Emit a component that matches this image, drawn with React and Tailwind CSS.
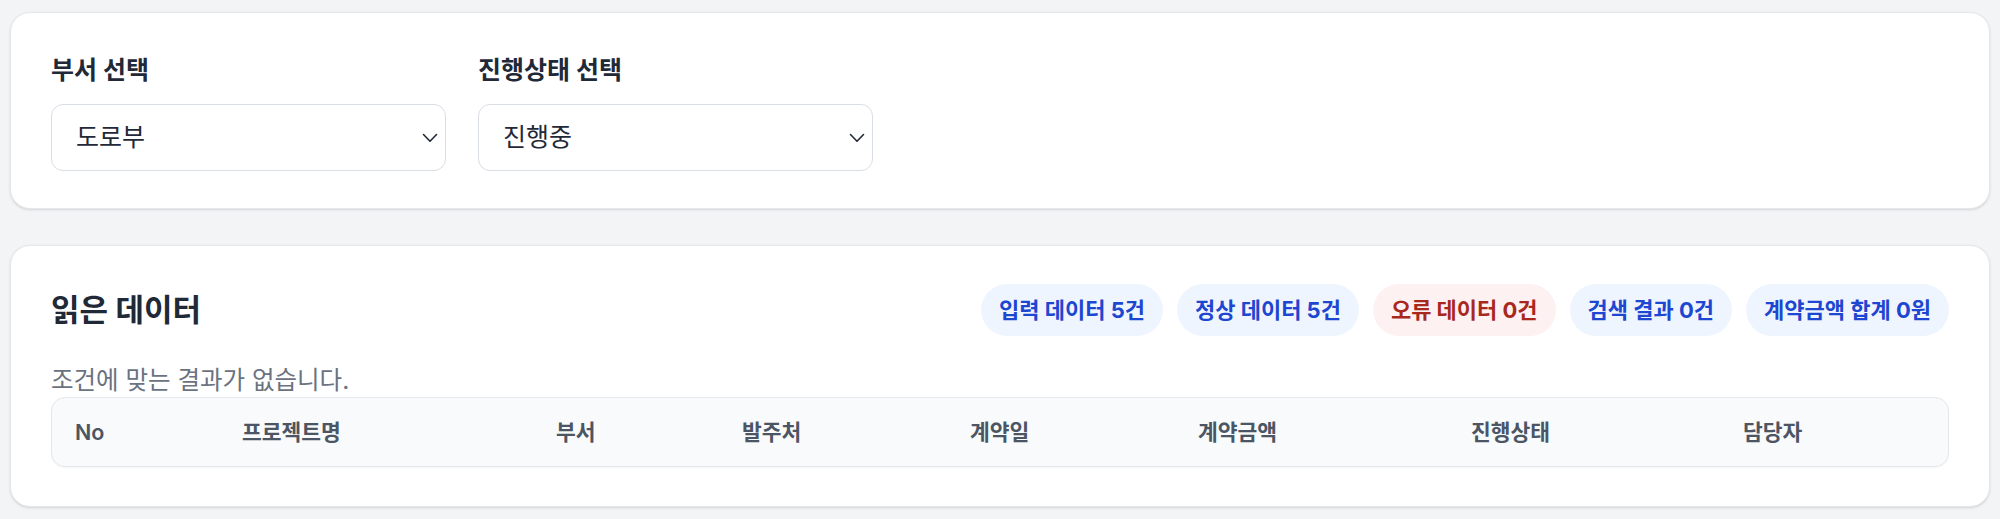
import React from "react";

const badges = [
  { label: "입력 데이터 5건", tone: "blue" },
  { label: "정상 데이터 5건", tone: "blue" },
  { label: "오류 데이터 0건", tone: "red" },
  { label: "검색 결과 0건", tone: "blue" },
  { label: "계약금액 합계 0원", tone: "blue" },
];

const columns = [
  { name: "No", width: "w-[167px]" },
  { name: "프로젝트명", width: "w-[314px]" },
  { name: "부서", width: "w-[186px]" },
  { name: "발주처", width: "w-[228px]" },
  { name: "계약일", width: "w-[228px]" },
  { name: "계약금액", width: "w-[273px]" },
  { name: "진행상태", width: "w-[272px]" },
  { name: "담당자", width: "w-[228px]" },
];

function Chevron() {
  return (
    <svg width="16" height="10" viewBox="0 0 16 10" fill="none" className="shrink-0">
      <path d="M1.5 1.5 8 8.2l6.5-6.7" stroke="#1f2937" strokeWidth="1.6" strokeLinecap="round" strokeLinejoin="round" />
    </svg>
  );
}

function SelectBox({ label, value }) {
  return (
    <div className="w-[395px]">
      <div className="text-[25px] leading-[34px] font-bold text-[#1f2937]">{label}</div>
      <div className="mt-[17px] h-[67px] flex items-center justify-between rounded-[12px] border border-[#d9dde4] bg-white pl-[24px] pr-[7px]">
        <span className="text-[25px] text-[#1f2937]">{value}</span>
        <Chevron />
      </div>
    </div>
  );
}

export default function App() {
  return (
    <div
      className="min-h-[519px] bg-[#f3f4f6] px-[10px] pt-3 pb-3"
      style={{ fontFamily: 'Inter, "Noto Sans CJK KR", sans-serif' }}
    >
      <section className="h-[197px] rounded-[20px] border border-[#e5e7eb] bg-white px-10 pt-10 shadow-sm">
        <div className="flex gap-8">
          <SelectBox label="부서 선택" value="도로부" />
          <SelectBox label="진행상태 선택" value="진행중" />
        </div>
      </section>

      <section className="mt-[36px] h-[262px] rounded-[20px] border border-[#e5e7eb] bg-white px-10 pt-[38px] shadow-sm">
        <div className="flex h-[52px] items-center justify-between">
          <h2 className="text-[31px] font-bold text-[#1f2937]">읽은 데이터</h2>
          <div className="flex gap-[14px]">
            {badges.map((b, i) => (
              <span
                key={i}
                className={
                  b.tone === "red"
                    ? "h-[52px] flex items-center rounded-full bg-[#fdf1f1] px-[18px] text-[22px] font-bold text-[#a8281e]"
                    : "h-[52px] flex items-center rounded-full bg-[#eff5ff] px-[18px] text-[22px] font-bold text-[#1d46d1]"
                }
              >
                {b.label}
              </span>
            ))}
          </div>
        </div>

        <p className="mt-[28px] text-[24.5px] leading-[32px] text-[#6b7280]">조건에 맞는 결과가 없습니다.</p>

        <div className="mt-px overflow-hidden rounded-[14px] border border-[#e5e7eb] bg-[#f8fafc] shadow-[0_1px_1px_rgba(0,0,0,0.04)]">
          <table className="w-full table-fixed border-collapse">
            <thead>
              <tr>
                {columns.map((c) => (
                  <th
                    key={c.name}
                    className={`${c.width} h-[68px] pl-[23px] text-left text-[21.5px] font-semibold text-[#4b5563]`}
                  >
                    {c.name}
                  </th>
                ))}
              </tr>
            </thead>
          </table>
        </div>
      </section>
    </div>
  );
}
